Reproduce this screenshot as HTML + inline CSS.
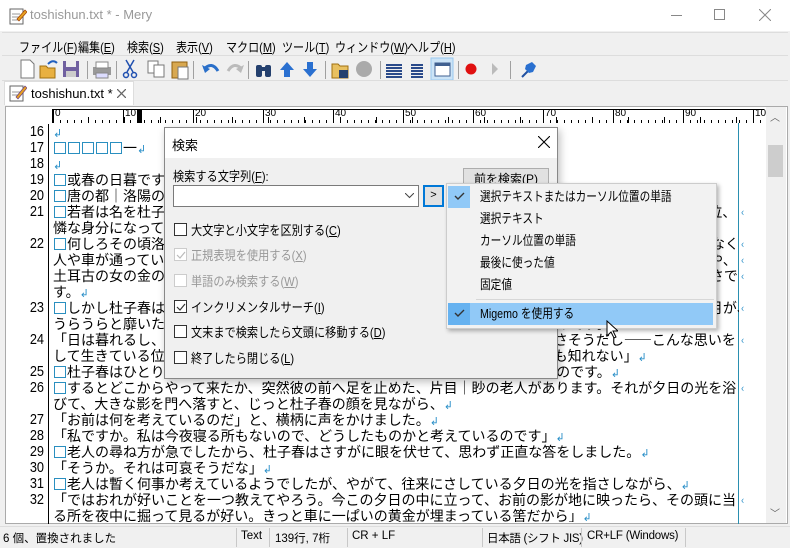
<!DOCTYPE html>
<html><head><meta charset="utf-8"><style>
*{margin:0;padding:0;box-sizing:border-box}
body{width:790px;height:548px;overflow:hidden;background:#f0f0f0;font-family:"Liberation Sans","Noto Sans CJK JP",sans-serif;font-size:12px;color:#000;position:relative}
.a{position:absolute}
.t{white-space:nowrap}
.sep{position:absolute;top:61px;width:1px;height:18px;background:#a0a0a0}
.ed{font-family:"Noto Sans CJK JP",sans-serif;font-size:14px;line-height:16px}
.row{position:absolute;left:53px;height:16px;white-space:nowrap;width:686px;overflow:hidden}
.num{position:absolute;left:8px;width:36px;text-align:right;font-family:"Liberation Sans",sans-serif;font-size:15px;line-height:16px;height:16px;transform:scaleX(.85);transform-origin:right}
.b{display:inline-block;width:12px;height:12px;border:1.6px solid #2a8fc0;margin:0 1px;vertical-align:-1px}
.nl{color:#2a8fc8;font-size:11px}
.lt{position:absolute;left:741px;color:#2a8fc8;font-size:11px;line-height:16px}
.cb{position:absolute;left:174px;width:13px;height:13px;border:1px solid #333;background:#fff}
.cl{position:absolute;left:191px;white-space:nowrap;font-size:13px;transform:scaleX(.86);transform-origin:left}
.mi{position:absolute;left:480px;white-space:nowrap;font-size:13px;transform:scaleX(.82);transform-origin:left}
.ss{position:absolute;top:528px;width:1px;height:19px;background:#c8c8c8}
.mn{position:absolute;top:37px;white-space:nowrap;font-size:13px;transform:scaleX(.85);transform-origin:left}
.st{position:absolute;top:530px;white-space:nowrap;font-size:11.5px}
</style></head><body>
<div class="a" style="left:0;top:0;width:790px;height:31px;background:#fff"></div>
<svg class="a" style="left:9px;top:7px" width="18" height="18"><rect x="1" y="2" width="13" height="15" fill="#fff" stroke="#666"/><line x1="3" y1="7" x2="11" y2="7" stroke="#999"/><line x1="3" y1="10" x2="11" y2="10" stroke="#999"/><line x1="3" y1="13" x2="9" y2="13" stroke="#999"/><path d="M8 12 L16 3 L18 5 L10 14 Z" fill="#e6a020" stroke="#a04000" stroke-width=".7"/></svg>
<div class="a t" style="left:30px;top:7px;font-size:13px;color:#999">toshishun.txt * - Mery</div>
<div class="a" style="left:671px;top:15px;width:11px;height:1px;background:#888"></div>
<div class="a" style="left:714px;top:9px;width:11px;height:11px;border:1px solid #888"></div>
<svg class="a" style="left:759px;top:9px" width="12" height="12"><path d="M0 0L12 12M12 0L0 12" stroke="#888"/></svg>
<div class="a" style="left:2px;top:32px;width:786px;height:24px;border-top:1px solid #ddd;border-bottom:1px solid #ddd"></div>
<div class="mn" style="left:19px">ファイル(<u>F</u>)</div>
<div class="mn" style="left:78px">編集(<u>E</u>)</div>
<div class="mn" style="left:127px">検索(<u>S</u>)</div>
<div class="mn" style="left:176px">表示(<u>V</u>)</div>
<div class="mn" style="left:226px">マクロ(<u>M</u>)</div>
<div class="mn" style="left:282px">ツール(<u>T</u>)</div>
<div class="mn" style="left:335px">ウィンドウ(<u>W</u>)</div>
<div class="mn" style="left:407px">ヘルプ(<u>H</u>)</div>
<svg class="a" style="left:0;top:56px" width="560" height="26">
<g transform="translate(20,4)"><path d="M1 0h9l4 4v14H1z" fill="#fff" stroke="#777"/></g>
<g transform="translate(40,4)"><path d="M0 6h6l2 2h7v10H0z" fill="#e8b040" stroke="#a07010"/><path d="M8 4 Q13 -1 17 3" stroke="#2060c0" fill="none" stroke-width="2"/></g>
<g transform="translate(63,5)"><rect width="16" height="16" fill="#7060a0"/><rect x="3" y="0" width="10" height="6" fill="#eee"/><rect x="3" y="10" width="10" height="6" fill="#ccc"/></g>
<g transform="translate(93,6)"><rect x="0" y="5" width="18" height="8" fill="#999"/><rect x="3" y="0" width="12" height="6" fill="#fff" stroke="#888"/><rect x="3" y="11" width="12" height="5" fill="#ddf" stroke="#888"/></g>
<g transform="translate(123,4)" stroke="#2050b0" fill="none" stroke-width="1.5"><path d="M3 0L10 12M11 0L4 12"/><circle cx="3" cy="15" r="2.5"/><circle cx="11" cy="15" r="2.5"/></g>
<g transform="translate(148,5)"><rect width="10" height="12" fill="#fff" stroke="#777"/><rect x="6" y="4" width="10" height="12" fill="#fff" stroke="#777"/></g>
<g transform="translate(172,4)"><rect y="2" width="15" height="16" fill="#d8a850" stroke="#906010"/><rect x="6" y="7" width="10" height="12" fill="#fff" stroke="#777"/></g>
<g transform="translate(202,7)"><path d="M2 6 Q10 -2 16 8" stroke="#2a6fc9" stroke-width="3" fill="none"/><path d="M0 2l3 8 5-4z" fill="#2a6fc9"/></g>
<g transform="translate(226,7)"><path d="M16 6 Q8 -2 2 8" stroke="#bbb" stroke-width="3" fill="none"/><path d="M18 2l-3 8-5-4z" fill="#bbb"/></g>
<g transform="translate(255,6)" fill="#24406e"><rect x="1" y="3" width="6" height="12" rx="2"/><rect x="10" y="3" width="6" height="12" rx="2"/><rect x="6" y="5" width="5" height="4"/></g>
<g transform="translate(280,6)"><path d="M7 0l7 8h-4v7H4V8H0z" fill="#2a70d0"/></g>
<g transform="translate(303,6)"><path d="M7 15l7-8h-4V0H4v7H0z" fill="#2a70d0"/></g>
<g transform="translate(332,6)"><path d="M0 2h6l2 2h8v12H0z" fill="#e8c060" stroke="#a07010"/><rect x="7" y="8" width="9" height="8" fill="#24406e"/></g>
<circle cx="364" cy="13" r="8" fill="#aaa"/>
<g transform="translate(386,8)" fill="#2a4a8a"><rect width="16" height="2"/><rect y="3" width="16" height="2"/><rect y="6" width="16" height="2"/><rect y="9" width="16" height="2"/><rect y="12" width="16" height="2"/></g>
<g transform="translate(411,8)" fill="#2a4a8a"><rect width="12" height="2"/><rect y="3" width="12" height="2"/><rect y="6" width="12" height="2"/><rect y="9" width="12" height="2"/><rect y="12" width="12" height="2"/></g>
<rect x="431" y="2" width="22" height="22" fill="#cce4f7" stroke="#99c9ef"/>
<g transform="translate(435,7)"><rect width="15" height="13" fill="#fff" stroke="#406090"/><rect width="15" height="3" fill="#406090"/></g>
<circle cx="471" cy="13" r="5.5" fill="#e01010"/>
<path d="M492 7l6 6-6 6z" fill="#bbb"/>
<g transform="translate(518,5)"><path d="M4 16l6-6" stroke="#2050a0" stroke-width="2"/><path d="M8 4l6-3 4 4-3 6-4 1-4-4z" fill="#2a70d0"/></g>
</svg>
<div class="sep" style="left:87px"></div><div class="sep" style="left:116px"></div><div class="sep" style="left:193px"></div><div class="sep" style="left:248px"></div><div class="sep" style="left:325px"></div><div class="sep" style="left:380px"></div><div class="sep" style="left:458px"></div><div class="sep" style="left:510px"></div>
<div class="a" style="left:2px;top:80px;width:786px;height:1px;background:#ddd"></div>
<div class="a" style="left:4px;top:81px;width:130px;height:24px;background:#fff;border:1px solid #ddd;border-bottom:none"></div>
<svg class="a" style="left:9px;top:84px" width="18" height="18"><rect x="1" y="2" width="13" height="15" fill="#fff" stroke="#666"/><line x1="3" y1="8" x2="11" y2="8" stroke="#999"/><line x1="3" y1="11" x2="11" y2="11" stroke="#999"/><path d="M7 13 L16 2 L18 4 L9 15 Z" fill="#e6a020" stroke="#704080" stroke-width=".7"/></svg>
<div class="a t" style="left:31px;top:86px;font-size:13px">toshishun.txt *</div>
<svg class="a" style="left:117px;top:89px" width="9" height="9"><path d="M0 0L9 9M9 0L0 9" stroke="#666" stroke-width="1.3"/></svg>
<div class="a" style="left:5px;top:106px;width:783px;height:418px;background:#fff;border:1px solid #aaa"></div>
<div class="a" style="left:52px;top:109px;width:712px;height:14px;border-top:1px solid #000;border-left:1px solid #000;background:repeating-linear-gradient(90deg,#000 0 1px,transparent 1px 7px) 0 10px/100% 4px no-repeat,repeating-linear-gradient(90deg,transparent 0 35px,#000 35px 36px) 0 7px/100% 7px no-repeat,repeating-linear-gradient(90deg,#000 0 1px,transparent 1px 70px) 0 0/100% 14px no-repeat"></div>
<div class="a t" style="left:55px;top:108px;font-size:10px">
<span class="a" style="left:0">0</span><span class="a" style="left:70px">10</span><span class="a" style="left:140px">20</span><span class="a" style="left:210px">30</span><span class="a" style="left:280px">40</span><span class="a" style="left:350px">50</span><span class="a" style="left:420px">60</span><span class="a" style="left:490px">70</span><span class="a" style="left:560px">80</span><span class="a" style="left:630px">90</span><span class="a" style="left:700px">100</span></div>
<div class="a" style="left:137px;top:110px;width:5px;height:13px;background:#000"></div>
<div class="a" style="left:48px;top:124px;width:1px;height:400px;background:#000"></div>
<div class="a" style="left:738px;top:123px;width:1px;height:401px;background:#2a8fb0"></div>
<div class="a" style="left:766px;top:107px;width:20px;height:416px;background:#f0f0f0"></div>
<div class="a" style="left:768px;top:145px;width:15px;height:32px;background:#cdcdcd"></div>
<div class="a" style="left:770px;top:109px;font-size:10px;color:#606060">︿</div>
<div class="a" style="left:770px;top:505px;font-size:10px;color:#606060">﹀</div>
<div class="ed">
<div class="num" style="top:124px">16</div><div class="row" style="top:124px"><span class="nl">↲</span></div>
<div class="num" style="top:140px">17</div><div class="row" style="top:140px"><span class="b"></span><span class="b"></span><span class="b"></span><span class="b"></span><span class="b"></span>一<span class="nl">↲</span></div>
<div class="num" style="top:156px">18</div><div class="row" style="top:156px"><span class="nl">↲</span></div>
<div class="num" style="top:172px">19</div><div class="row" style="top:172px"><span class="b"></span>或春の日暮です。<span class="nl">↲</span></div>
<div class="num" style="top:188px">20</div><div class="row" style="top:188px"><span class="b"></span>唐の都｜洛陽の西の門の下に、ぼんやり空を仰いでいる、一人の若者がありました。<span class="nl">↲</span></div>
<div class="num" style="top:204px">21</div><div class="row" style="top:204px"><span class="b"></span>若者は名を杜子春といって、元は金持の息子でしたが、今は財産を費い尽して、その日の暮しにも困る位、</div><div class="lt" style="top:204px">‹</div>
<div class="row" style="top:220px">憐な身分になっているのです。<span class="nl">↲</span></div>
<div class="num" style="top:236px">22</div><div class="row" style="top:236px"><span class="b"></span>何しろその頃洛陽といえば、天下に並ぶもののない、繁昌を極めた都ですから、往来にはまだしっきりなく、</div><div class="lt" style="top:236px">‹</div>
<div class="row" style="top:252px">人や車が通っていました。門一ぱいに当っている、油のような夕日の光の中に、老人のかぶった紗の帽子や、</div><div class="lt" style="top:252px">‹</div>
<div class="row" style="top:268px">土耳古の女の金の耳環や、白馬に飾った色糸の手綱が、絶えず流れて行く容子は、まるで画のような美しさで</div><div class="lt" style="top:268px">‹</div>
<div class="row" style="top:284px">す。<span class="nl">↲</span></div>
<div class="num" style="top:300px">23</div><div class="row" style="top:300px"><span class="b"></span>しかし杜子春は相変らず、門の壁に身を凭せて、ぼんやり空ばかり眺めていました。空には、もう細い月が、</div><div class="lt" style="top:300px">‹</div>
<div class="row" style="top:316px">うらうらと靡いた霞の中に、まるで爪の痕かと思う程、かすかに白く浮んでいるのです。<span class="nl">↲</span></div>
<div class="num" style="top:332px">24</div><div class="row" style="top:332px">「日は暮れるし、腹は減るし、その上もうどこへ行っても、泊めてくれる所はなさそうだし――こんな思いを</div><div class="lt" style="top:332px">‹</div>
<div class="row" style="top:348px">して生きている位なら、いっそ川へでも身を投げて、死んでしまった方がましかも知れない」<span class="nl">↲</span></div>
<div class="num" style="top:364px">25</div><div class="row" style="top:364px"><span class="b"></span>杜子春はひとりさっきから、こんな取りとめもないことを思いめぐらしていたのです。<span class="nl">↲</span></div>
<div class="num" style="top:380px">26</div><div class="row" style="top:380px"><span class="b"></span>するとどこからやって来たか、突然彼の前へ足を止めた、片目｜眇の老人があります。それが夕日の光を浴</div><div class="lt" style="top:380px">‹</div>
<div class="row" style="top:396px">びて、大きな影を門へ落すと、じっと杜子春の顔を見ながら、<span class="nl">↲</span></div>
<div class="num" style="top:412px">27</div><div class="row" style="top:412px">「お前は何を考えているのだ」と、横柄に声をかけました。<span class="nl">↲</span></div>
<div class="num" style="top:428px">28</div><div class="row" style="top:428px">「私ですか。私は今夜寝る所もないので、どうしたものかと考えているのです」<span class="nl">↲</span></div>
<div class="num" style="top:444px">29</div><div class="row" style="top:444px"><span class="b"></span>老人の尋ね方が急でしたから、杜子春はさすがに眼を伏せて、思わず正直な答をしました。<span class="nl">↲</span></div>
<div class="num" style="top:460px">30</div><div class="row" style="top:460px">「そうか。それは可哀そうだな」<span class="nl">↲</span></div>
<div class="num" style="top:476px">31</div><div class="row" style="top:476px"><span class="b"></span>老人は暫く何事か考えているようでしたが、やがて、往来にさしている夕日の光を指さしながら、<span class="nl">↲</span></div>
<div class="num" style="top:492px">32</div><div class="row" style="top:492px">「ではおれが好いことを一つ教えてやろう。今この夕日の中に立って、お前の影が地に映ったら、その頭に当</div><div class="lt" style="top:492px">‹</div>
<div class="row" style="top:508px;height:14px">る所を夜中に掘って見るが好い。きっと車に一ぱいの黄金が埋まっている筈だから」<span class="nl">↲</span></div>
</div>
<div class="a" style="left:0;top:526px;width:790px;height:22px;background:#f0f0f0;border-top:1px solid #ddd"></div>
<div class="st" style="left:3px">6 個、置換されました</div>
<div class="ss" style="left:236px"></div><div class="st" style="left:241px">Text</div>
<div class="ss" style="left:269px"></div><div class="st" style="left:275px">139行, 7桁</div>
<div class="ss" style="left:347px"></div><div class="st" style="left:352px">CR + LF</div>
<div class="ss" style="left:482px"></div><div class="st" style="left:487px;letter-spacing:-.3px">日本語 (シフト JIS)</div>
<div class="ss" style="left:581px"></div><div class="st" style="left:587px;letter-spacing:-.2px">CR+LF (Windows)</div>
<div class="ss" style="left:685px"></div>
<div class="a" style="left:164px;top:127px;width:394px;height:252px;background:#f0f0f0;border:1px solid #888;box-shadow:2px 3px 8px rgba(0,0,0,.25)"></div>
<div class="a" style="left:165px;top:128px;width:392px;height:30px;background:#fff"></div>
<div class="a t" style="left:172px;top:135px;font-size:13px">検索</div>
<svg class="a" style="left:538px;top:136px" width="12" height="12"><path d="M0 0L12 12M12 0L0 12" stroke="#000" stroke-width="1.1"/></svg>
<div class="a t" style="left:173px;top:166px;font-size:13px;transform:scaleX(.86);transform-origin:left">検索する文字列(<u>F</u>):</div>
<div class="a" style="left:173px;top:185px;width:246px;height:22px;background:#fff;border:1px solid #7a7a7a"></div>
<svg class="a" style="left:405px;top:193px" width="9" height="6"><path d="M0 0L4.5 4.5L9 0" stroke="#444" fill="none"/></svg>
<div class="a" style="left:423px;top:185px;width:21px;height:22px;background:#e1e1e1;border:2px solid #0078d7;text-align:center;font-size:11px;line-height:17px">&gt;</div>
<div class="a t" style="left:463px;top:168px;width:86px;height:23px;background:#e1e1e1;border:1px solid #adadad;text-align:center;font-size:12px;line-height:20px">前を検索(P)</div>
<div class="cb" style="top:223px"></div><div class="cl" style="top:220px">大文字と小文字を区別する(<u>C</u>)</div>
<div class="cb" style="top:248px;border-color:#ccc"></div><svg class="a" style="left:176px;top:251px" width="10" height="9"><path d="M1 4l3 3 5-6" stroke="#bbb" fill="none" stroke-width="1.2"/></svg><div class="cl" style="top:245px;color:#999">正規表現を使用する(<u>X</u>)</div>
<div class="cb" style="top:274px;border-color:#ccc"></div><div class="cl" style="top:271px;color:#999">単語のみ検索する(<u>W</u>)</div>
<div class="cb" style="top:300px"></div><svg class="a" style="left:176px;top:303px" width="10" height="9"><path d="M1 4l3 3 5-6" stroke="#333" fill="none" stroke-width="1.2"/></svg><div class="cl" style="top:297px">インクリメンタルサーチ(<u>I</u>)</div>
<div class="cb" style="top:325px"></div><div class="cl" style="top:322px">文末まで検索したら文頭に移動する(<u>D</u>)</div>
<div class="cb" style="top:351px"></div><div class="cl" style="top:348px">終了したら閉じる(<u>L</u>)</div>
<div class="a" style="left:446px;top:183px;width:271px;height:146px;background:#f2f2f2;border:1px solid #ccc;box-shadow:2px 2px 4px rgba(0,0,0,.3)"></div>
<div class="a" style="left:448px;top:186px;width:22px;height:22px;background:#91c9f7"></div>
<svg class="a" style="left:454px;top:192px" width="11" height="9"><path d="M1 4l3 3 6-6" stroke="#333" fill="none" stroke-width="1.4"/></svg>
<div class="mi" style="top:186px">選択テキストまたはカーソル位置の単語</div>
<div class="mi" style="top:208px">選択テキスト</div>
<div class="mi" style="top:230px">カーソル位置の単語</div>
<div class="mi" style="top:252px">最後に使った値</div>
<div class="mi" style="top:274px">固定値</div>
<div class="a" style="left:476px;top:299px;width:238px;height:1px;background:#d7d7d7"></div>
<div class="a" style="left:448px;top:303px;width:265px;height:22px;background:#91c9f7"></div>
<div class="a" style="left:448px;top:303px;width:22px;height:22px;background:#66b2f0"></div>
<svg class="a" style="left:454px;top:309px" width="11" height="9"><path d="M1 4l3 3 6-6" stroke="#333" fill="none" stroke-width="1.4"/></svg>
<div class="mi" style="top:303px">Migemo を使用する</div>
<svg class="a" style="left:606px;top:320px" width="12" height="19"><path d="M1 1v15l4-4 3 6 2-1-3-6h5z" fill="#fff" stroke="#000"/></svg>
</body></html>
